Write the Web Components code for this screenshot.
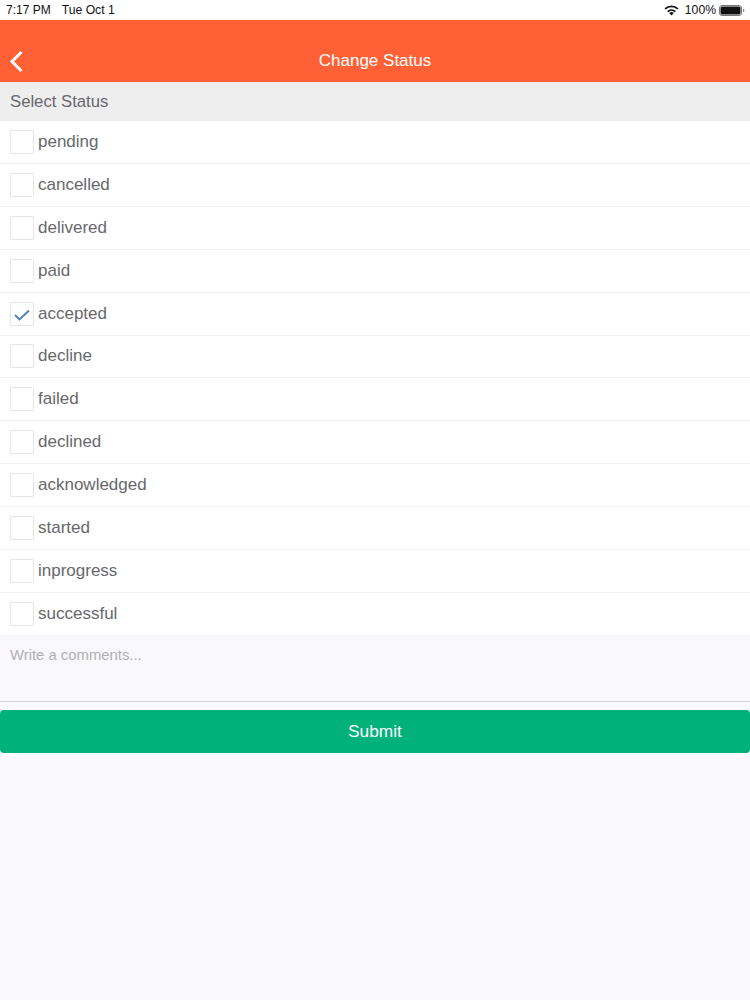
<!DOCTYPE html>
<html>
<head>
<meta charset="utf-8">
<style>
  html, body { margin: 0; padding: 0; background: #f9f8fb; }
  body { font-family: "Liberation Sans", Arial, sans-serif; }
</style>
</head>
<body>
<status-page></status-page>
<script>
class StatusBar extends HTMLElement {
  constructor() {
    super()
    this.attachShadow({ mode: 'open' })
    this.shadowRoot.innerHTML = `
      <style>
        :host {
          display: flex;
          align-items: center;
          height: 20px;
          padding: 0 5px 0 6px;
          box-sizing: border-box;
          background: #fff;
          color: #111;
          font-size: 12.2px;
        }
        .time { margin-right: 11px; font-size: 12px; }
        .right { margin-left: auto; display: flex; align-items: center; }
        .wifi { margin-right: 6px; }
      </style>
      <span class="time">7:17 PM</span>
      <span>Tue Oct 1</span>
      <div class="right">
        <svg class="wifi" width="15" height="11" viewBox="0 0 15 11">
          <path d="M7.5 10.6 5.2 8.1a3.3 3.3 0 0 1 4.6 0z" fill="#111"/>
          <path d="M3.7 6.6a5.5 5.5 0 0 1 7.6 0" fill="none" stroke="#111" stroke-width="1.7"/>
          <path d="M1.1 3.9a9.2 9.2 0 0 1 12.8 0" fill="none" stroke="#111" stroke-width="1.7"/>
        </svg>
        <span>100%</span>
        <svg style="margin-left:3px" width="26" height="11" viewBox="0 0 26 11">
          <rect x="0.5" y="0.5" width="22" height="10" rx="2.5" fill="none" stroke="#777"/>
          <rect x="1.5" y="1.5" width="20" height="8" rx="1.6" fill="#111"/>
          <path d="M24 3.7c1 .3 1.4 1 1.4 1.8s-.4 1.5-1.4 1.8z" fill="#888"/>
        </svg>
      </div>
    `
  }
}

class NavHeader extends HTMLElement {
  constructor() {
    super()
    this.attachShadow({ mode: 'open' })
    this.shadowRoot.innerHTML = `
      <style>
        :host {
          display: flex;
          position: relative;
          align-items: center;
          justify-content: center;
          height: 62px;
          padding-top: 20px;
          box-sizing: border-box;
          background: #ff6035;
          color: #fff;
          font-size: 17px;
        }
        svg { position: absolute; left: 8px; top: 30px; }
      </style>
      <svg width="16" height="23" viewBox="0 0 16 23">
        <path d="M13.5 2 4 11.5 13.5 21" fill="none" stroke="#fff" stroke-width="3"/>
      </svg>
      <slot></slot>
    `
  }
}

class SectionTitle extends HTMLElement {
  constructor() {
    super()
    this.attachShadow({ mode: 'open' })
    this.shadowRoot.innerHTML = `
      <style>
        :host {
          display: flex;
          align-items: center;
          height: 39px;
          padding-left: 10px;
          box-sizing: border-box;
          background: #eeeeef;
          color: #68686c;
          font-size: 16.7px;
        }
      </style>
      <slot></slot>
    `
  }
}

class StatusRow extends HTMLElement {
  constructor() {
    super()
    this.attachShadow({ mode: 'open' })
    let tick = this.hasAttribute('checked')
      ? `<svg width="16" height="12" viewBox="0 0 16 12"><path d="M1 6 5.5 10.5 15 1.5" fill="none" stroke="#4a7fc0" stroke-width="1.8"/></svg>`
      : ''
    this.shadowRoot.innerHTML = `
      <style>
        :host {
          display: flex;
          align-items: center;
          gap: 4px;
          height: 42.92px;
          padding-left: 10px;
          box-sizing: border-box;
          background: #fff;
          border-bottom: 1px solid #f2f1f4;
          color: #68686c;
          font-size: 17px;
        }
        .box {
          display: flex;
          align-items: center;
          justify-content: center;
          width: 24px;
          height: 24px;
          box-sizing: border-box;
          border: 1px solid #e6e6e8;
          border-radius: 1px;
          background: #fff;
        }
        .box svg { margin-top: 2px; }
      </style>
      <div class="box">${tick}</div>
      <slot></slot>
    `
  }
}

class CommentBox extends HTMLElement {
  constructor() {
    super()
    this.attachShadow({ mode: 'open' })
    this.shadowRoot.innerHTML = `
      <style>
        :host {
          display: block;
          height: 66px;
          padding: 11px 10px 0;
          box-sizing: border-box;
          border-bottom: 1px solid #d4d4d6;
          color: #b0b0b3;
          font-size: 14.85px;
        }
      </style>
      <slot></slot>
    `
  }
}

class SubmitButton extends HTMLElement {
  constructor() {
    super()
    this.attachShadow({ mode: 'open' })
    this.shadowRoot.innerHTML = `
      <style>
        :host {
          display: flex;
          align-items: center;
          justify-content: center;
          height: 43px;
          margin-top: 8px;
          border-radius: 4px;
          background: #00b27a;
          color: #fff;
          font-size: 17.3px;
        }
      </style>
      <slot></slot>
    `
  }
}

class StatusPage extends HTMLElement {
  constructor() {
    super()
    this.attachShadow({ mode: 'open' })
    let statuses = ['pending', 'cancelled', 'delivered', 'paid', 'accepted', 'decline',
      'failed', 'declined', 'acknowledged', 'started', 'inprogress', 'successful']
    let rows = statuses.map((s) =>
      `<status-row${s === 'accepted' ? ' checked' : ''}>${s}</status-row>`).join('')
    this.shadowRoot.innerHTML = `
      <style>
        :host { display: block; min-height: 1000px; background: #f9f8fb; }
      </style>
      <status-bar></status-bar>
      <nav-header>Change Status</nav-header>
      <section-title>Select Status</section-title>
      ${rows}
      <comment-box>Write a comments...</comment-box>
      <submit-button>Submit</submit-button>
    `
  }
}

customElements.define('status-bar', StatusBar)
customElements.define('nav-header', NavHeader)
customElements.define('section-title', SectionTitle)
customElements.define('status-row', StatusRow)
customElements.define('comment-box', CommentBox)
customElements.define('submit-button', SubmitButton)
customElements.define('status-page', StatusPage)
</script>
</body>
</html>
